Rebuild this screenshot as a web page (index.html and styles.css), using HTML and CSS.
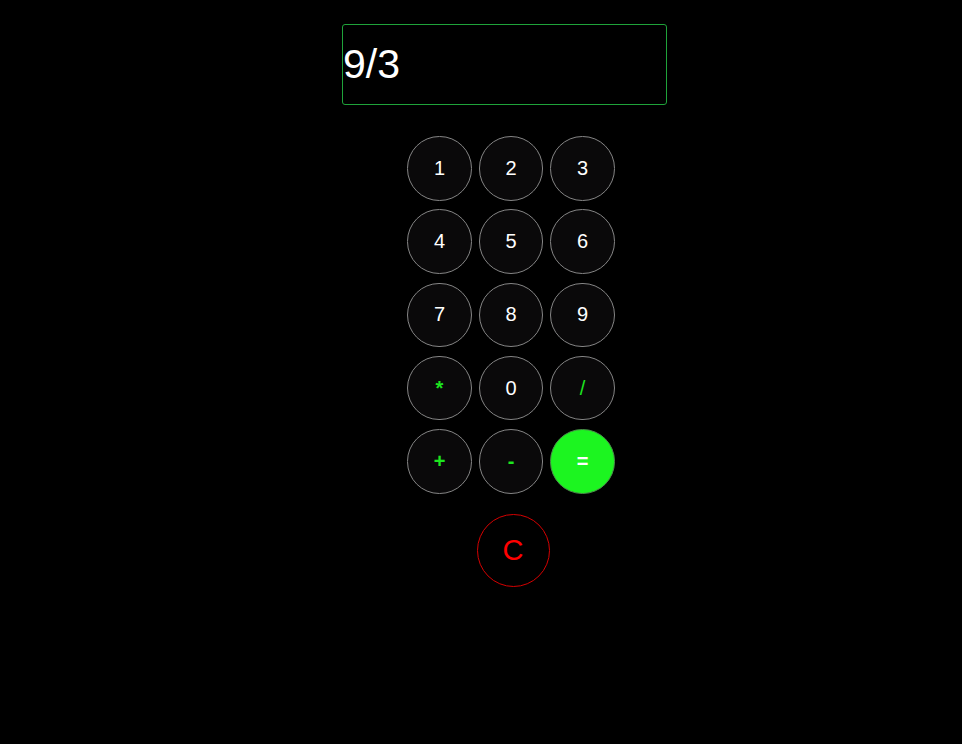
FILE: index.html
```html
<!DOCTYPE html>
<html>
<head>
<meta charset="utf-8">
<link rel="stylesheet" href="styles.css">
</head>
<body>
<div class="calc">
  <div class="display">9/3</div>
  <div class="keys">
    <button class="key">1</button>
    <button class="key">2</button>
    <button class="key">3</button>
    <button class="key">4</button>
    <button class="key">5</button>
    <button class="key">6</button>
    <button class="key">7</button>
    <button class="key">8</button>
    <button class="key">9</button>
    <button class="key op">*</button>
    <button class="key">0</button>
    <button class="key op slash">/</button>
    <button class="key op">+</button>
    <button class="key op">-</button>
    <button class="key eq">=</button>
  </div>
  <button class="clear">C</button>
</div>
</body>
</html>
```
FILE: styles.css
```css
html, body {
  margin: 0;
  padding: 0;
  background: #000;
  font-family: "Liberation Sans", Arial, sans-serif;
}
.calc {
  width: 325px;
  margin-left: 342px;
  padding-top: 24px;
  display: flex;
  flex-direction: column;
  align-items: center;
}
.display {
  box-sizing: border-box;
  width: 325px;
  height: 81px;
  border: 1px solid #1fa33a;
  border-radius: 3px;
  color: #fff;
  font-size: 41px;
  line-height: 78px;
  padding-left: 0;
  align-self: stretch;
}
.keys {
  margin-top: 31px;
  margin-left: 13px;
  display: grid;
  grid-template-columns: repeat(3, 64.5px);
  grid-auto-rows: 64.5px;
  column-gap: 7px;
  row-gap: 8.75px;
}
.key {
  box-sizing: border-box;
  width: 64.5px;
  height: 64.5px;
  border-radius: 50%;
  border: 1px solid #858585;
  background: #0a090a;
  color: #fff;
  font-family: "Liberation Sans", Arial, sans-serif;
  font-size: 20px;
  padding: 0;
}
.key.op {
  color: #1de61f;
  font-weight: bold;
}
.key.slash {
  font-weight: normal;
}
.key.eq {
  background: #1cf520;
  border-color: #4a8a4a;
  color: #fff;
  font-weight: bold;
}
.clear {
  box-sizing: border-box;
  margin-top: 20px;
  margin-left: 17px;
  width: 73px;
  height: 73px;
  border-radius: 50%;
  border: 1px solid #d40000;
  background: #000;
  color: #ff0000;
  font-family: "Liberation Sans", Arial, sans-serif;
  font-size: 29px;
  padding: 0;
}
```
